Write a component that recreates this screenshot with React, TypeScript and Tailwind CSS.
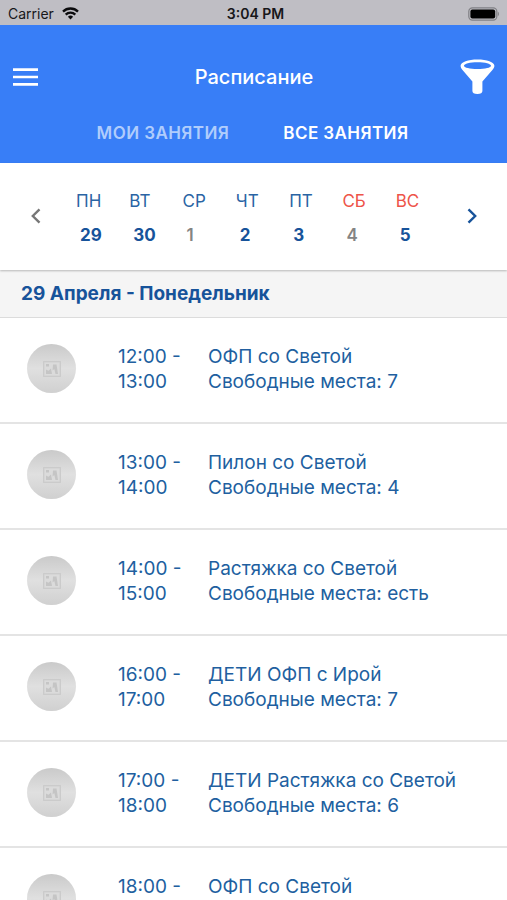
type Day = { label: string; date: number; weekend?: boolean; empty?: boolean };
type Lesson = { start: string; end: string; title: string; places: string };

const days: Day[] = [
  { label: "ПН", date: 29 },
  { label: "ВТ", date: 30 },
  { label: "СР", date: 1, empty: true },
  { label: "ЧТ", date: 2 },
  { label: "ПТ", date: 3 },
  { label: "СБ", date: 4, weekend: true, empty: true },
  { label: "ВС", date: 5, weekend: true },
];

const lessons: Lesson[] = [
  { start: "12:00", end: "13:00", title: "ОФП со Светой", places: "7" },
  { start: "13:00", end: "14:00", title: "Пилон со Светой", places: "4" },
  { start: "14:00", end: "15:00", title: "Растяжка со Светой", places: "есть" },
  { start: "16:00", end: "17:00", title: "ДЕТИ ОФП с Ирой", places: "7" },
  { start: "17:00", end: "18:00", title: "ДЕТИ Растяжка со Светой", places: "6" },
  { start: "18:00", end: "19:00", title: "ОФП со Светой", places: "5" },
];

function StatusBar() {
  return (
    <div className="grid h-[25px] shrink-0 grid-cols-3 items-center bg-[#bfbec4] px-2 pt-0.5 text-sm text-[#17171a]">
      <div className="flex items-center gap-2">
        <span>Carrier</span>
        <svg width="17" height="13" viewBox="0 0 17 13" fill="none" stroke="#0b0b0d" strokeWidth="2.3" aria-hidden="true">
          <path d="M1 4.6a10.6 10.6 0 0 1 15 0" />
          <path d="M3.7 7.6a6.8 6.8 0 0 1 9.6 0" />
          <path d="M8.5 12.4 5.9 9.8a3.7 3.7 0 0 1 5.2 0Z" fill="#0b0b0d" stroke="none" />
        </svg>
      </div>
      <span className="pl-1 text-center font-semibold">3:04 PM</span>
      <svg className="justify-self-end" width="32" height="14" viewBox="0 0 32 14" aria-hidden="true">
        <rect x="1.8" y="0.8" width="28" height="12.4" rx="3.6" fill="none" stroke="#808085" strokeWidth="1.2" />
        <rect x="3.4" y="2.4" width="24.8" height="9.2" rx="2" fill="#000" />
        <path d="M30.8 4.8c1.5.6 1.5 3.8 0 4.4Z" fill="#808085" />
      </svg>
    </div>
  );
}

function Header() {
  return (
    <header className="flex h-[138px] shrink-0 flex-col bg-[#387ef7] text-white">
      <div className="mt-7 flex h-12 items-center justify-between pr-3 pl-[13px]">
        <button aria-label="Меню" className="flex h-9 w-9 items-center">
          <svg width="25" height="18" viewBox="0 0 25 18" stroke="currentColor" strokeWidth="2.6" aria-hidden="true">
            <path d="M0 1.6h25M0 9h25M0 16.4h25" />
          </svg>
        </button>
        <h1 className="text-xl font-medium">Расписание</h1>
        <button aria-label="Фильтр" className="flex h-9 w-9 items-center justify-end">
          <svg width="35" height="36" viewBox="0 0 35 36" aria-hidden="true">
            <path
              fill="currentColor"
              fillRule="evenodd"
              d="M17.5 .5C8.200.5.6 3.200.6 6.800c0 1.500.6 2.500 1.700 3.900L12.400 22.500v9.600c0 2 1.700 2.900 5 2.900s5-.9 5-2.900v-9.600l10.200-11.800c1.100-1.400 1.800-2.400 1.800-3.900C34.400 3.200 26.800.5 17.500.5Zm0 2.700c7.700 0 13.500 1.600 13.500 3.500s-5.800 3.300-13.500 3.300S4 8.600 4 6.700s5.800-3.500 13.500-3.500Z"
            />
          </svg>
        </button>
      </div>
      <nav className="mt-5 flex justify-center gap-[54px] pr-0.5 text-[17px] leading-[25px] tracking-wide">
        <button className="font-semibold text-[#b0cdfc]">МОИ ЗАНЯТИЯ</button>
        <button className="font-semibold">ВСЕ ЗАНЯТИЯ</button>
      </nav>
    </header>
  );
}

function Chevron({ right = false }: { right?: boolean }) {
  return (
    <svg width="10" height="16" viewBox="0 0 10 16" fill="none" stroke="currentColor" strokeWidth="2.4" aria-hidden="true">
      <path d={right ? "M1.500 1.300 8.200 8l-6.700 6.700" : "M8.500 1.300 1.800 8l6.700 6.700"} />
    </svg>
  );
}

function Week() {
  return (
    <section className="z-10 flex h-[107px] shrink-0 items-center bg-white shadow-[0_1px_2px_rgba(0,0,0,0.25)]">
      <button aria-label="Предыдущая неделя" className="flex w-[76px] justify-center pr-1 pb-0.5 text-[#777]">
        <Chevron />
      </button>
      <div className="grid flex-1 grid-cols-7 pt-0.5">
        {days.map((day) => (
          <button key={day.label} className="flex flex-col gap-2.5 text-left text-[17px] leading-6">
            <span className={day.weekend ? "text-[#ee5448]" : "text-[#2a64a4]"}>{day.label}</span>
            <span className={day.empty ? "pl-1 font-semibold text-[#848484]" : "pl-1 font-bold text-[#17539a]"}>{day.date}</span>
          </button>
        ))}
      </div>
      <button aria-label="Следующая неделя" className="flex w-[58px] justify-center pr-3 pb-0.5 text-[#17539a]">
        <Chevron right />
      </button>
    </section>
  );
}

function Placeholder() {
  return (
    <div className="flex h-[49px] w-[49px] items-center justify-center rounded-full bg-linear-to-b from-[#cacaca] via-[#e0e0e0] to-[#d0d0d0]">
      <svg width="18" height="16" viewBox="0 0 18 16" aria-hidden="true">
        <rect x="0.7" y="0.7" width="16.600" height="14.600" fill="#dbdbdb" stroke="#c9c9c9" strokeWidth="1.2" />
        <path d="M3 3h3v2.500H3ZM3 13V8.500l2.500 1.200L8 7.500 9 13ZM10 3.500h3.500L15 13h-2.500L11.300 8 9.500 9.500Z" fill="#c5c5c5" />
      </svg>
    </div>
  );
}

function LessonRow({ lesson }: { lesson: Lesson }) {
  return (
    <li className="flex h-[106px] shrink-0 border-b-2 border-[#e4e4e4] pt-[26px] pl-[27px] text-[19px] leading-[25px] text-[#215f9f]">
      <div className="w-[91px]">
        <Placeholder />
      </div>
      <div className="w-[90px]">
        {lesson.start} -<br />
        {lesson.end}
      </div>
      <div className="flex-1">
        <p>{lesson.title}</p>
        <p>Свободные места: {lesson.places}</p>
      </div>
    </li>
  );
}

export default function App() {
  return (
    <div className="flex h-screen flex-col overflow-hidden bg-white font-['Inter','Liberation_Sans',sans-serif]">
      <StatusBar />
      <Header />
      <Week />
      <main className="min-h-0 flex-1 overflow-y-auto [scrollbar-width:none]">
        <h2 className="flex h-12 items-center border-b border-[#dcdcdc] bg-[#f5f5f5] pt-0.5 pl-[21px] text-[19px] font-bold text-[#17539a]">
          29 Апреля - Понедельник
        </h2>
        <ul className="flex flex-col">
          {lessons.map((lesson) => (
            <LessonRow key={lesson.start} lesson={lesson} />
          ))}
        </ul>
      </main>
    </div>
  );
}
